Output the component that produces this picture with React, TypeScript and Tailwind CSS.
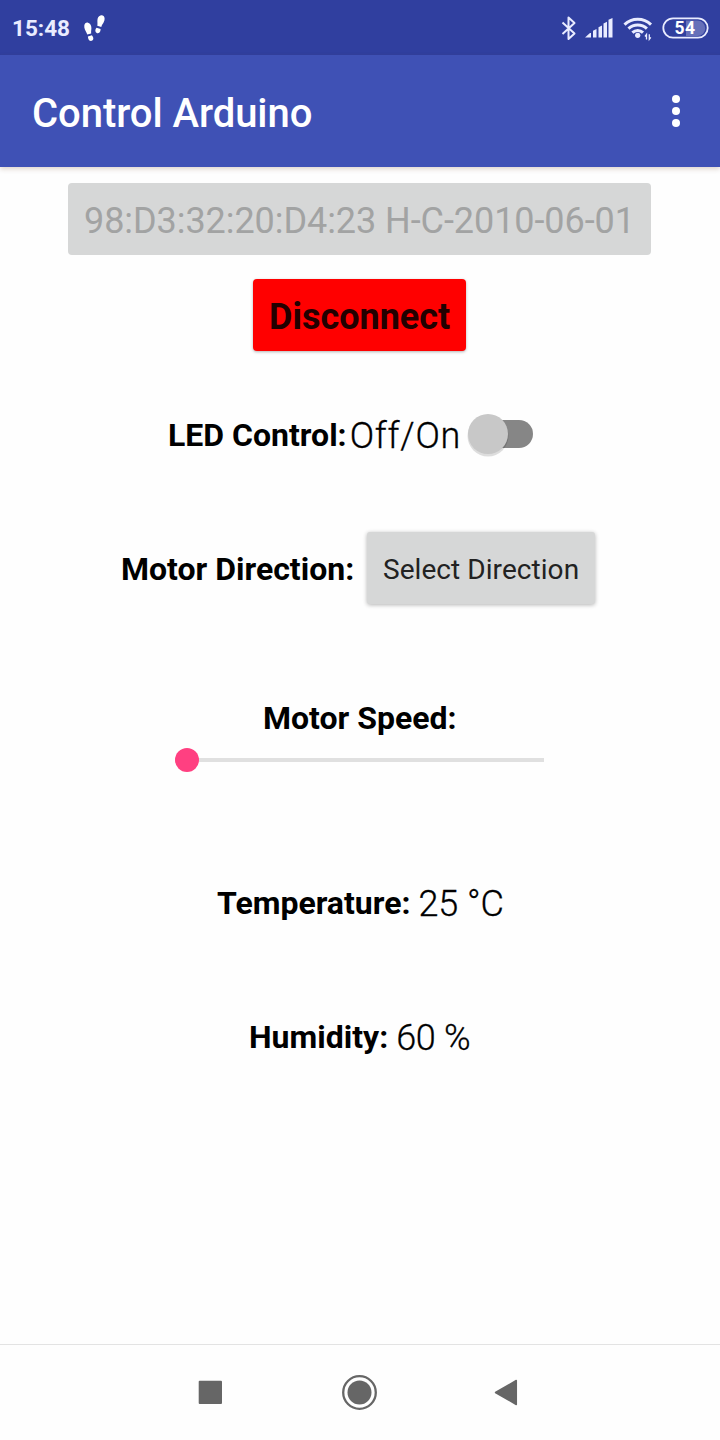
import type { ReactNode } from "react";

function StatusBar() {
  return (
    <div className="flex h-[55px] items-center bg-[#303f9f] pl-[12px] text-[#e9ecff]">
      <span className="w-[59px] whitespace-nowrap pt-[2px] text-[22.5px] font-bold leading-none">15:48</span>
      <svg className="ml-[12px]" width="24" height="30" viewBox="83 12 24 30" fill="#fff">
        <path d="M84.3 24.5c.3-2.2 2-3.3 3.7-2.8 2.4.7 3.4 3 3.4 5.2 0 1.7-.5 3.6-.2 5.600l-4 1c-.4-2-1.600-3.400-2.300-5.100-.5-1.300-.8-2.500-.6-3.900z" />
        <path d="M87.900 35.400l4-1.200c1 1.200 1.700 2.700 1.300 4-.5 1.600-2.500 2.200-3.800 1.200-1-.8-1.300-2.400-1.500-4z" />
        <path d="M104.600 17.300c-.2-2.200-1.800-3.500-3.600-3.100-2.400.5-3.500 2.700-3.600 5-.1 1.700.3 3.600-.1 5.500l4 1.300c.5-1.900 1.800-3.200 2.500-4.900.6-1.300.9-2.400.8-3.800z" />
        <path d="M100.600 28l-4-1.300c-1 1.100-1.500 2.400-1.100 3.700.5 1.600 2.400 2.300 3.700 1.400 1.100-.7 1.300-2.300 1.400-3.800z" />
      </svg>
      <svg className="ml-auto" width="160" height="30" viewBox="560 12 160 30" fill="none">
        <path d="M562.5 21.5L574.500 32.500l-6 5.500V16.500l6 5.500L562.500 33" stroke="#e9ecff" strokeWidth="2" strokeLinejoin="round" />
        <g fill="#e9ecff">
          <path d="M585 36.500l5-4.500h1v4.500z" />
          <path d="M593 29.800l3.500-1.800v8.500h-3.500zM598.500 26.200l3.500-1.700v12h-3.500zM603.500 22.500l3.500-1.700v15.700h-3.500zM608.500 18.800l4-1.700v19.400h-4z" />
          <circle cx="637.7" cy="34.3" r="2.600" />
        </g>
        <g stroke="#e9ecff" strokeWidth="3">
          <path d="M624.500 23.600a19.200 19.200 0 0 1 26.500 0" />
          <path d="M628.500 27.700a13.200 13.200 0 0 1 18.400 0" />
          <path d="M632.400 31.700a7.600 7.600 0 0 1 10.600 0" />
        </g>
        <path d="M646.500 38.500v-5l-1.500 2M649.300 33.300v5l1.500-2" stroke="#e9ecff" strokeWidth="1.3" />
        <path d="M686 19.500h11.500a7.700 7.700 0 0 1 0 15.500H686z" fill="#6670b9" />
        <rect x="663.3" y="17.3" width="44.4" height="19.4" rx="9.7" stroke="#e9ecff" strokeWidth="1.8" />
        <text x="674.6" y="33.400" fill="#fff" fontSize="17.5" fontWeight="700" letterSpacing="0.4">54</text>
      </svg>
    </div>
  );
}

function TitleBar() {
  return (
    <header className="flex h-[112px] items-center bg-[#3f51b5] pl-[32px] text-white shadow-[0_2px_5px_rgba(90,40,0,0.2)]">
      <h1 className="whitespace-nowrap pt-[6px] text-[40px] font-medium leading-none tracking-[-0.05px]">Control Arduino</h1>
      <svg className="ml-auto mr-[38px]" width="12" height="36" fill="#fff">
        <circle cx="6" cy="6" r="4" />
        <circle cx="6" cy="18" r="4" />
        <circle cx="6" cy="30" r="4" />
      </svg>
    </header>
  );
}

function Label({ children }: { children: ReactNode }) {
  return <span className="whitespace-nowrap text-[32px] font-bold leading-none">{children}</span>;
}

function NavigationBar() {
  return (
    <nav className="h-[96px] border-t border-[#e3e3e3] bg-[#fefefe]">
      <svg width="720" height="95" viewBox="0 1345 720 95" fill="#666">
        <rect x="198.7" y="1380.7" width="23.3" height="23.3" rx="1" />
        <circle cx="359.5" cy="1392.5" r="12" />
        <circle cx="359.5" cy="1392.5" r="16.3" fill="none" stroke="#666" strokeWidth="2.3" />
        <path d="M495.5 1392.5l20.8-12v24z" stroke="#666" strokeWidth="1.5" strokeLinejoin="round" />
      </svg>
    </nav>
  );
}

export default function App() {
  return (
    <div className="flex h-[1440px] w-[720px] flex-col overflow-hidden bg-[#fefefe] font-[Roboto,sans-serif] text-black">
      <StatusBar />
      <TitleBar />
      <main className="flex flex-1 flex-col">
        <div className="ml-[68px] mt-[16px] flex h-[72px] w-[583px] items-center whitespace-nowrap rounded-[4px] bg-[#d6d7d7] pl-[16px] pt-[3px] text-[36px] font-normal leading-none tracking-[-0.06px] text-[#a2a3a3]">
          98:D3:32:20:D4:23 H-C-2010-06-01
        </div>
        <button className="ml-[253px] mt-[24px] flex h-[72px] w-[213px] items-center rounded-[4px] bg-[#ff0000] pl-[16px] pt-[3px] text-[36px] font-bold leading-none text-[#220000] shadow-[0_1px_3px_rgba(0,0,0,0.3)]">
          Disconnect
        </button>
        <div className="mt-[48px] flex h-[72px] items-center pl-[168px]">
          <Label>LED Control:</Label>
          <span className="ml-[3px] whitespace-nowrap pt-[2px] text-[36px] font-light leading-none tracking-[0.8px] [-webkit-text-stroke:0.3px_black]">Off/On</span>
          <svg className="ml-auto mr-[180px]" width="76" height="50" viewBox="464 410 76 50">
            <rect x="478" y="420" width="55" height="28" rx="14" fill="#868686" />
            <circle cx="488" cy="436" r="20.5" fill="#000" opacity="0.13" />
            <circle cx="488" cy="434" r="20" fill="#c8c8c8" />
          </svg>
        </div>
        <div className="mt-[61px] flex h-[72px] items-center pl-[121px]">
          <div className="flex pt-[2px]">
            <Label>Motor Direction:</Label>
          </div>
          <button className="ml-auto mr-[125px] flex h-[72px] w-[228px] items-center whitespace-nowrap rounded-[3px] bg-[#d6d7d7] pl-[16px] pt-[4px] text-[28px] font-normal leading-none tracking-[0.06px] text-[#222] shadow-[0_1px_4px_rgba(0,0,0,0.3)]">
            Select Direction
          </button>
        </div>
        <div className="mt-[98px] flex h-[32px] items-center pl-[263px]">
          <Label>Motor Speed:</Label>
        </div>
        <div className="ml-[175px] mt-[14px] flex h-[24px] w-[369px] items-center">
          <div className="h-[24px] w-[24px] rounded-full bg-[#ff4081]" />
          <div className="h-[4px] flex-1 bg-[#e0e0e0]" />
        </div>
        <div className="mt-[114px] flex h-[36px] items-start pl-[217px]">
          <div className="flex pt-[1px]">
            <Label>Temperature:</Label>
          </div>
          <span className="ml-[8px] whitespace-nowrap text-[36px] font-light leading-none tracking-[-0.1px] [-webkit-text-stroke:0.3px_black]">25 °C</span>
        </div>
        <div className="mt-[98px] flex h-[36px] items-start pl-[249px]">
          <div className="flex pt-[1px]">
            <Label>Humidity:</Label>
          </div>
          <span className="ml-[8px] whitespace-nowrap text-[36px] font-light leading-none tracking-[-0.3px] [-webkit-text-stroke:0.3px_black]">60 %</span>
        </div>
      </main>
      <NavigationBar />
    </div>
  );
}
